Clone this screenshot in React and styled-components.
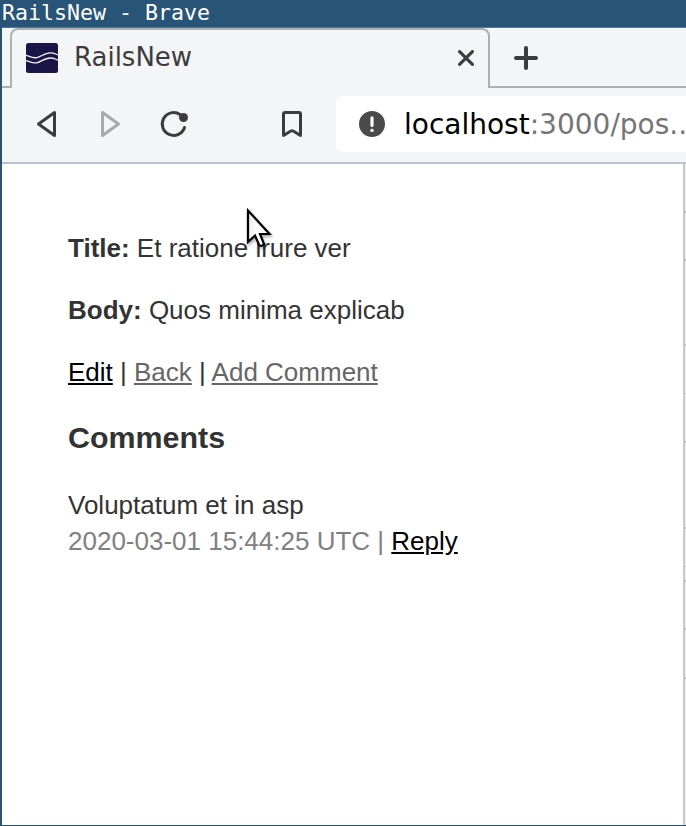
import React from 'react';
import styled, { createGlobalStyle } from 'styled-components';

const GlobalStyle = createGlobalStyle`
  * { box-sizing: border-box; }
  body { margin: 0; overflow: hidden; background: #fff; }
`;

const Window = styled.div`
  position: relative;
  display: flex;
  flex-direction: column;
  width: 686px;
  height: 826px;
  overflow: hidden;
  background: #fff;
  border-left: 2px solid #285577;
  border-bottom: 1px solid #285577;
`;

const TitleBar = styled.header`
  flex: none;
  height: 28px;
  margin-left: -2px;
  padding-left: 2px;
  background: #285577;
  border-bottom: 1px solid #4c7899;
  color: #fff;
  font: 21.6px/26px "DejaVu Sans Mono", monospace;
  white-space: pre;
`;

const TabStrip = styled.nav`
  flex: none;
  display: flex;
  height: 60px;
  background: #f4f5f7;
`;

const StripEdge = styled.div`
  flex: none;
  width: 8px;
  border-bottom: 2px solid #aeafb1;
`;

const Tab = styled.div`
  flex: none;
  display: flex;
  align-items: center;
  width: 480px;
  padding: 0 14px 2px 14px;
  border: 2px solid #aeafb1;
  border-bottom: 0;
  border-radius: 8px 8px 0 0;
`;

const TabTitle = styled.span`
  flex: 1;
  margin: -2px 0 0 16px;
  color: #3c3c3c;
  font: 26px/32px "DejaVu Sans", sans-serif;
`;

const StripRest = styled.div`
  flex: 1;
  padding: 18px 0 0 23px;
  border-bottom: 2px solid #aeafb1;
`;

const Icon = styled.svg`
  display: block;
  flex: none;
  fill: none;
  stroke: ${(p) => p.$color || '#3c3c3c'};
  stroke-width: ${(p) => p.$weight || 3};
  stroke-linecap: round;
  stroke-linejoin: round;
`;

const Toolbar = styled.div`
  flex: none;
  display: flex;
  align-items: center;
  height: 76px;
  padding-left: 28px;
  background: #f4f5f7;
  border-bottom: 2px solid #bac3cb;
`;

const NavButtons = styled.div`
  display: flex;
  gap: 32px;
  width: 246px;
  margin-top: -2px;
`;

const BookmarkSlot = styled.div`
  width: 60px;
  margin-top: -2px;
`;

const AddressBar = styled.div`
  flex: 1;
  display: flex;
  align-items: center;
  min-width: 0;
  height: 56px;
  margin-top: -2px;
  padding-left: 22px;
  background: #fff;
  border-radius: 8px 0 0 8px;
`;

const SiteInfo = styled.svg`
  flex: none;
`;

const Url = styled.span`
  flex: none;
  margin: 2px 0 0 18px;
  color: #757575;
  font: 28px/36px "DejaVu Sans", sans-serif;
  white-space: nowrap;
`;

const Host = styled.span`
  color: #000;
`;

const Viewport = styled.div`
  flex: 1;
  display: flex;
  min-height: 0;
`;

const Page = styled.main`
  flex: 1;
  padding: 66px 0 0 66px;
  color: #333;
  font: 26px/36px "Liberation Sans", Arial, sans-serif;
`;

const Paragraph = styled.p`
  margin: 0 0 26px;
`;

const Heading = styled.h3`
  margin: 29px 0 32px;
  font-size: 30.42px;
  line-height: 36px;
`;

const Link = styled.a`
  color: ${(p) => (p.$visited ? '#666' : '#000')};
  text-decoration: underline;
`;

const Meta = styled.div`
  color: #808080;
`;

const SidePanel = styled.aside`
  flex: none;
  width: 3px;
  border-left: 2px solid #c8c8c8;
  background: #f0f0f0;
`;

const PanelRow = styled.div`
  height: ${(p) => p.$height}px;
  border-bottom: ${(p) => (p.$faint ? '1px solid #d0d0d0' : '2px solid #bdbdbd')};
`;

const Cursor = styled.svg`
  position: absolute;
  left: 240px;
  top: 205px;
  filter: drop-shadow(1px 2px 1.5px rgba(0, 0, 0, 0.35));
`;

const rows = [
  { height: 49 },
  { height: 48 },
  { height: 85 },
  { height: 48, faint: true },
  { height: 49 },
  { height: 86 },
  { height: 38, faint: true },
  { height: 15 },
  { height: 48 },
  { height: 49 },
];

export default function App() {
  return (
    <>
      <GlobalStyle />
      <Window>
        <TitleBar>RailsNew - Brave</TitleBar>
        <TabStrip>
          <StripEdge />
          <Tab>
            <svg width="32" height="30" viewBox="0 0 32 30">
              <rect width="32" height="30" rx="2.5" fill="#1b1446" />
              <g fill="none" stroke="#f1f1f5" strokeWidth="1.3">
                <path d="M0 12.3C3.5 13.4 7 15.5 11 14.6S19 9.8 24 9.8S29 11 32 12" />
                <path d="M0 17.5C3.5 18.6 7 20.7 11 19.8S19 15 24 15S29 16.2 32 17.2" />
              </g>
            </svg>
            <TabTitle>RailsNew</TabTitle>
            <Icon width="16" height="16" viewBox="0 0 16 16" $weight={3.1}>
              <path d="M1.6 1.6L14.4 14.4M14.4 1.6L1.6 14.4" />
            </Icon>
          </Tab>
          <StripRest>
            <Icon width="26" height="24" viewBox="0 0 26 24" $weight={4}>
              <path d="M3 12H23M13 2V22" />
            </Icon>
          </StripRest>
        </TabStrip>
        <Toolbar>
          <NavButtons>
            <Icon width="32" height="32" viewBox="0 0 32 32">
              <path d="M24.5 4.5V27.5L8.5 16Z" />
            </Icon>
            <Icon width="32" height="32" viewBox="0 0 32 32" $color="#a8a9aa">
              <path d="M8.5 4.5V27.5L24.5 16Z" />
            </Icon>
            <Icon width="32" height="32" viewBox="0 0 32 32">
              <path d="M26.5 19.5A11.4 11.4 0 1 1 22 6.5" />
              <circle cx="25.5" cy="9.5" r="4.5" fill="#3c3c3c" stroke="none" />
            </Icon>
          </NavButtons>
          <BookmarkSlot>
            <Icon width="32" height="32" viewBox="0 0 32 32">
              <path d="M7.5 6Q7.5 4.5 9 4.5H23Q24.5 4.5 24.5 6V27.5L17.2 23Q16 22.4 14.8 23L7.5 27.5Z" />
            </Icon>
          </BookmarkSlot>
          <AddressBar>
            <SiteInfo width="28" height="28" viewBox="0 0 28 28">
              <circle cx="14" cy="14" r="13" fill="#4a4a4a" />
              <path d="M14 7.8V15.5" stroke="#fff" strokeWidth="3.2" strokeLinecap="round" />
              <circle cx="14" cy="20.4" r="1.7" fill="#fff" />
            </SiteInfo>
            <Url><Host>localhost</Host>:3000/pos..</Url>
          </AddressBar>
        </Toolbar>
        <Viewport>
          <Page>
            <Paragraph><strong>Title:</strong> Et ratione irure ver</Paragraph>
            <Paragraph><strong>Body:</strong> Quos minima explicab</Paragraph>
            <Paragraph>
              <Link>Edit</Link> | <Link $visited>Back</Link> | <Link $visited>Add Comment</Link>
            </Paragraph>
            <Heading>Comments</Heading>
            <div>Voluptatum et in asp</div>
            <Meta>2020-03-01 15:44:25 UTC | <Link>Reply</Link></Meta>
          </Page>
          <SidePanel>
            {rows.map((row, i) => (
              <PanelRow key={i} $height={row.height} $faint={row.faint} />
            ))}
          </SidePanel>
        </Viewport>
        <Cursor width="32" height="46" viewBox="0 0 32 46">
          <defs>
            <linearGradient id="cursorFill" x1="0" y1="0" x2="1" y2="0.3">
              <stop offset="0" stopColor="#e8e8e8" />
              <stop offset="0.6" stopColor="#fff" />
            </linearGradient>
          </defs>
          <path d="M6 5.5V37L13 30.5L17.2 40Q19.5 42 22 39L18 29H27.5Z" fill="url(#cursorFill)" stroke="#000" strokeWidth="2.2" />
        </Cursor>
      </Window>
    </>
  );
}
